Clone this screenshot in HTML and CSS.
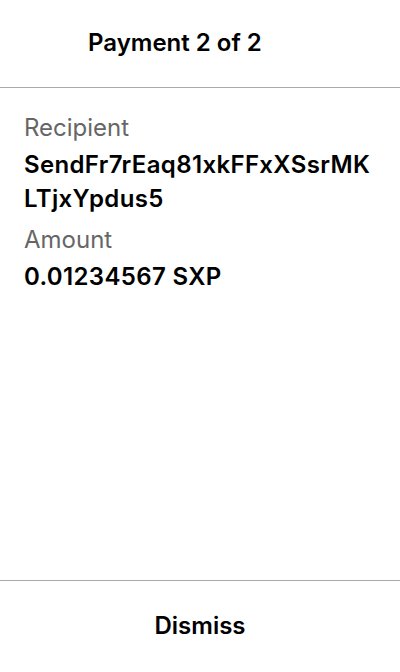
FILE: index.html
```html
<!DOCTYPE html>
<html>
<head>
<meta charset="utf-8">
<link rel="stylesheet" href="styles.css">
</head>
<body>
<div class="screen">
  <header class="header">
    <h1 class="title">Payment 2 of 2</h1>
  </header>
  <main class="content">
    <div class="label">Recipient</div>
    <div class="value">SendFr7rEaq81xkFFxXSsrMKLTjxYpdus5</div>
    <div class="label label-second">Amount</div>
    <div class="value">0.01234567 SXP</div>
  </main>
  <footer class="footer">
    <button class="dismiss">Dismiss</button>
  </footer>
</div>
</body>
</html>
```
FILE: styles.css
```css
* { box-sizing: border-box; }
html, body { margin: 0; padding: 0; background: #fff; }
body { font-family: Inter, "Noto Sans", sans-serif; color: #000; }
.screen { width: 400px; height: 672px; display: flex; flex-direction: column; }
.header { height: 88px; border-bottom: 1px solid #aaa; display: flex; align-items: center; padding-left: 88px; padding-bottom: 2px; }
.title { margin: 0; font-size: 24px; font-weight: 600; line-height: 24px; }
.content { flex: 1; padding: 23px 24px 0; }
.label { font-size: 24px; color: #666; line-height: 34px; }
.label-second { margin-top: 7px; }
.value { font-size: 24px; font-weight: 600; line-height: 34px; letter-spacing: 0.35px; word-break: break-all; margin-top: 3px; }
.footer { height: 92px; border-top: 1px solid #aaa; display: flex; justify-content: center; align-items: center; padding-bottom: 2px; }
.dismiss { border: 0; background: none; font-family: inherit; font-size: 24px; font-weight: 600; line-height: 24px; color: #000; padding: 0; }
```
